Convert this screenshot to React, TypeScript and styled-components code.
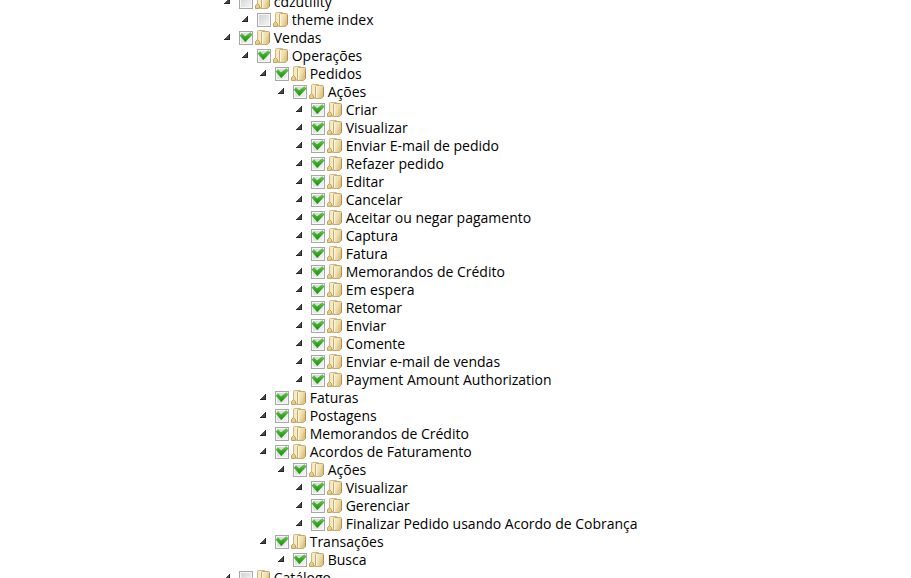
import React from 'react';
import styled, { createGlobalStyle } from 'styled-components';

const GlobalStyle = createGlobalStyle`
  body { margin: 0; background: #fff; }
`;

const Viewport = styled.main`
  height: 578px;
  overflow: hidden;
  background: #fff;
`;

const Tree = styled.ul`
  list-style: none;
  margin: -7px 0 0;
  padding: 0 0 0 221px;
`;

const Node = styled.li<{ $depth: number }>`
  display: flex;
  height: 18px;
  padding-left: ${(p) => p.$depth * 18}px;
  white-space: nowrap;
`;

const Icon = styled.svg`
  display: block;
  flex: none;
`;

const Label = styled.span`
  margin-left: 2.7px;
  font: 14px/18px "Open Sans", "Noto Sans", sans-serif;
  color: #000;
`;

const Arrow = () => (
  <Icon width="18" height="18" viewBox="0 0 18 18">
    <path d="M9 5v6H3v-1h1V9h1V8h1V7h1V6h1V5z" fill="#4a4a4a" />
    <path d="M3 10.5h6M8.5 5v6" stroke="#252525" fill="none" />
  </Icon>
);

const Checkbox = ({ checked }: { checked: boolean }) => (
  <Icon width="14" height="18" viewBox="0 0 14 18">
    <rect x=".5" y="2.5" width="13" height="13" fill="#f7f7f7" stroke="#a8a8a8" />
    <rect x="2" y="4" width="10" height="10" fill="url(#boxFill)" />
    {checked && (
      <path
        d="M.9 6.6L3 4.8L6 7.6L11.4 3.6L13.3 5.4L6.3 13Z"
        fill="url(#tickFill)"
        stroke="#35991f"
        strokeWidth=".3"
      />
    )}
  </Icon>
);

const Folder = () => (
  <Icon width="18" height="18" viewBox="0 0 18 18">
    <path d="M4.5 2.5Q4.5 1.5 5.5 1.5H11.5L12.5 3V14.5H4.5Z" fill="url(#folderBack)" stroke="#cdb98a" />
    <path d="M2.5 15.5V12.5L4.5 10.5L6.5 12.5V15.5Z" fill="#e6cd8e" stroke="#c3a35e" />
    <path d="M7.5 15.5L8.5 14V3.5Q8.5 2.5 9.5 2.5H15.5Q16.5 2.5 16.5 3.5V13.5L14.5 15.5Z" fill="url(#folderFront)" stroke="#c6ab70" />
    <path d="M9.5 3.5V14.5" stroke="#fff8df" />
    <path d="M16.5 4V13.5" stroke="#b3914d" />
  </Icon>
);

const Gradients = () => (
  <defs>
    <linearGradient id="boxFill" x1="0" y1="0" x2="1" y2="1">
      <stop stopColor="#d3d3d3" /><stop offset="1" stopColor="#f4f4f4" />
    </linearGradient>
    <linearGradient id="tickFill" x1="0" y1="0" x2="0" y2="1">
      <stop stopColor="#7ccc67" /><stop offset=".35" stopColor="#3fb329" /><stop offset="1" stopColor="#149006" />
    </linearGradient>
    <linearGradient id="folderBack">
      <stop stopColor="#f3e5bc" /><stop offset="1" stopColor="#fff9e3" />
    </linearGradient>
    <linearGradient id="folderFront" x1="0" y1="0" x2="1" y2=".5">
      <stop stopColor="#fff6d8" /><stop offset=".6" stopColor="#f0dfad" /><stop offset="1" stopColor="#dabe7e" />
    </linearGradient>
  </defs>
);

const Definitions = styled.svg`
  display: block;
  height: 0;
  width: 0;
`;

type Item = [depth: number, label: string, checked?: boolean];

const items: Item[] = [
  [0, 'cdzutility', false],
  [1, 'theme index', false],
  [0, 'Vendas'],
  [1, 'Operações'],
  [2, 'Pedidos'],
  [3, 'Ações'],
  [4, 'Criar'],
  [4, 'Visualizar'],
  [4, 'Enviar E-mail de pedido'],
  [4, 'Refazer pedido'],
  [4, 'Editar'],
  [4, 'Cancelar'],
  [4, 'Aceitar ou negar pagamento'],
  [4, 'Captura'],
  [4, 'Fatura'],
  [4, 'Memorandos de Crédito'],
  [4, 'Em espera'],
  [4, 'Retomar'],
  [4, 'Enviar'],
  [4, 'Comente'],
  [4, 'Enviar e-mail de vendas'],
  [4, 'Payment Amount Authorization'],
  [2, 'Faturas'],
  [2, 'Postagens'],
  [2, 'Memorandos de Crédito'],
  [2, 'Acordos de Faturamento'],
  [3, 'Ações'],
  [4, 'Visualizar'],
  [4, 'Gerenciar'],
  [4, 'Finalizar Pedido usando Acordo de Cobrança'],
  [2, 'Transações'],
  [3, 'Busca'],
  [0, 'Catálogo', false],
];

export default function App() {
  return (
    <Viewport>
      <GlobalStyle />
      <Definitions><Gradients /></Definitions>
      <Tree>
        {items.map(([depth, label, checked = true], index) => (
          <Node key={index} $depth={depth}>
            <Arrow />
            <Checkbox checked={checked} />
            <Folder />
            <Label>{label}</Label>
          </Node>
        ))}
      </Tree>
    </Viewport>
  );
}
